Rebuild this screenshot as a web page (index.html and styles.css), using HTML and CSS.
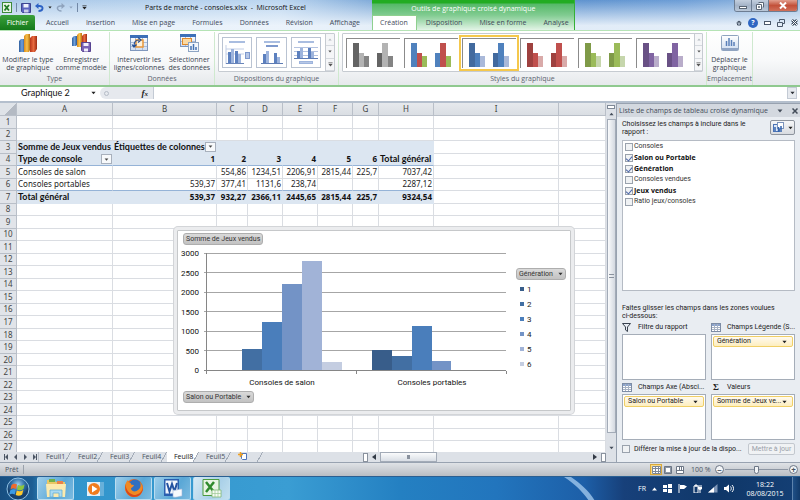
FILE: index.html
```html
<!DOCTYPE html>
<html lang="fr">
<head>
<meta charset="utf-8">
<title>Parts de marché - consoles.xlsx - Microsoft Excel</title>
<link rel="stylesheet" href="styles.css">
</head>
<body>
<svg class="defs" aria-hidden="true">
  <defs>
    <linearGradient id="gBlue"><stop offset="0" stop-color="#2f5f9e"/><stop offset=".5" stop-color="#6fa0dc"/><stop offset="1" stop-color="#2a5590"/></linearGradient>
    <linearGradient id="gGold"><stop offset="0" stop-color="#d98a1c"/><stop offset=".5" stop-color="#f7c04a"/><stop offset="1" stop-color="#b9700f"/></linearGradient>
    <linearGradient id="gRed"><stop offset="0" stop-color="#b8361a"/><stop offset=".5" stop-color="#e86a3f"/><stop offset="1" stop-color="#9c2b12"/></linearGradient>
    <linearGradient id="gCell" x2="0" y2="1"><stop offset="0" stop-color="#ffffff"/><stop offset="1" stop-color="#cfdcf0"/></linearGradient>
    <radialGradient id="gOrb" cy=".3"><stop offset="0" stop-color="#9fd0ee"/><stop offset=".6" stop-color="#2f6ea6"/><stop offset="1" stop-color="#16416f"/></radialGradient>
    <symbol id="down" viewBox="0 0 6 4"><path d="M0.5 0.5h5L3 3.5z" fill="currentColor"/></symbol>
    <symbol id="more" viewBox="0 0 6 6"><path d="M0.5 0.5h5v1h-5zM0.5 2.5h5L3 5.5z" fill="currentColor"/></symbol>
    <symbol id="sample" viewBox="0 0 54 29">
      <path class="a" d="M7 4h6v24H7zM31 14h5v14h-5z"/>
      <path class="b" d="M13 14h5v14h-5zM36 4h6v24h-6z"/>
      <path class="c" d="M18 17h5v11h-5zM42 17h5v11h-5z"/>
    </symbol>
    <symbol id="grid" viewBox="0 0 10 9">
      <rect x=".5" y=".5" width="9" height="8" fill="#fff" stroke="#7d8ca5"/>
      <path d="M1 1h8v2H1z" fill="#8ba3cc"/>
      <path d="M3.5 1v7M6.5 1v7M1 4.5h8M1 6.5h8" stroke="#a7b2c4" fill="none"/>
    </symbol>
  </defs>
</svg>

<header class="top">
  <div class="titlebar">
    <div class="quick">
      <svg width="10" height="11" viewBox="0 0 10 11"><rect x=".5" y=".5" width="9" height="10" fill="#e9f5e6" stroke="#3d8a3a"/><path d="M2.500 3l4.500 5.500M7 3L2.500 8.500" stroke="#1f7a24" stroke-width="1.800"/></svg>
      <i class="bar"></i>
      <button aria-label="Enregistrer"><svg width="10" height="10" viewBox="0 0 10 10"><path d="M.5.5h9v9h-8l-1-1z" fill="#5b64c0" stroke="#3c4590"/><path d="M2.500 1h5v3.500h-5z" fill="#eef1fb"/><path d="M3 6.500h4.500V9.500H3z" fill="#c9cde9"/></svg></button>
      <button aria-label="Annuler"><svg width="9" height="9" viewBox="0 0 9 9"><path d="M3.500 8c5 0 5.500-5 1-5H3" fill="none" stroke="#2c62c4" stroke-width="1.800"/><path d="M0 3l3.500-3v6z" fill="#2c62c4"/></svg></button>
      <svg class="tiny" width="4" height="3"><use href="#down"/></svg>
      <button class="off" aria-label="Rétablir"><svg width="9" height="9" viewBox="0 0 9 9"><path d="M5.500 8c-5 0-5.500-5-1-5H6" fill="none" stroke="#8fa3bd" stroke-width="1.500"/><path d="M9 3L5.500 0v6z" fill="#8fa3bd"/></svg></button>
      <svg class="tiny pale" width="4" height="3"><use href="#down"/></svg>
      <i class="bar"></i>
      <svg class="tiny" width="5" height="5"><use href="#more"/></svg>
    </div>
    <h1>Parts de marché - consoles.xlsx &nbsp;-&nbsp; Microsoft Excel</h1>
  </div>
  <nav class="tabs">
    <a class="file" href="#">Fichier</a>
    <a href="#">Accueil</a><a href="#">Insertion</a><a href="#">Mise en page</a><a href="#">Formules</a><a href="#">Données</a><a href="#">Révision</a><a href="#">Affichage</a>
  </nav>
  <div class="context">
    <div class="context-title">Outils de graphique croisé dynamique</div>
    <nav class="tabs">
      <a class="active" href="#">Création</a><a href="#">Disposition</a><a href="#">Mise en forme</a><a href="#">Analyse</a>
    </nav>
  </div>
  <div class="winbuttons">
    <button aria-label="Réduire"><svg width="8" height="8" viewBox="0 0 8 8"><rect x=".5" y="4.500" width="7" height="2" fill="#fff" stroke="#5a6675"/></svg></button><button aria-label="Restaurer"><svg width="8" height="8" viewBox="0 0 8 8"><path d="M2.500.5h5v5M.5 2.500h5v5h-5z" fill="#fff" stroke="#5a6675"/><path d="M2.500 4.500h1v1h-1z" stroke="#5a6675" fill="none"/></svg></button><button class="close" aria-label="Fermer"><svg width="8" height="7" viewBox="0 0 8 7"><path d="M1 .5l6 6M7 .5l-6 6" stroke="#fff" stroke-width="2"/></svg></button>
  </div>
  <div class="help">
    <svg width="6" height="6" viewBox="0 0 6 6"><path d="M.5 3L3 1l2.500 2M1.500 3.500L3 2.500l1.500 1v1.500h-3z" fill="none" stroke="#3d4a5c"/></svg>
    <span class="q">?</span>
    <svg width="7" height="7" viewBox="0 0 7 7"><rect x=".5" y="2.500" width="6" height="3" fill="#fff" stroke="#4b586a"/></svg>
    <svg width="8" height="8" viewBox="0 0 8 8"><path d="M2.500 2.500v-2h5v4h-2M.5 3.500h5v4h-5z" fill="none" stroke="#4b586a"/></svg>
    <svg width="7" height="7" viewBox="0 0 7 7"><path d="M1 1l5 5M6 1L1 6" stroke="#3d4a5c" stroke-width="2.500"/><path d="M1 1l5 5M6 1L1 6" stroke="#fff"/></svg>
  </div>
</header>

<section class="ribbon">
  <div class="group g-type">
    <div class="tools">
      <button><svg width="20" height="20" viewBox="0 0 20 20"><path d="M1 8l2-2h4v11l-1 2H1z" fill="url(#gBlue)"/><path d="M6 3l2-2h4v16l-1 2H6z" fill="url(#gGold)"/><path d="M12 5l2-2h5v13l-2 3h-5z" fill="url(#gRed)"/></svg><span>Modifier le type<br>de graphique</span></button>
      <button><svg width="20" height="20" viewBox="0 0 20 20"><path d="M1 5l2-2h3v9l-1 1H1z" fill="url(#gBlue)"/><path d="M6 2l2-2h3v12l-1 2H6z" fill="url(#gGold)"/><path d="M11 3l2-2h3v12h-5z" fill="url(#gRed)"/><path d="M10.500 9.500h9v9h-8l-1-1z" fill="#7a62b5" stroke="#574390"/><path d="M12.500 10h5v3h-5zM13 15.500h4v3h-4z" fill="#f1eefa"/></svg><span>Enregistrer<br>comme modèle</span></button>
    </div>
    <h2>Type</h2>
  </div>
  <div class="group g-data">
    <div class="tools">
      <button><svg width="20" height="20" viewBox="0 0 20 20"><rect x="1.500" y="2.500" width="17" height="15" fill="url(#gCell)" stroke="#7f97bd"/><path d="M1 2h18v3H1z" fill="#3d6fb8"/><path d="M6.500 5v12M13.500 5v12M2 9.500h16M2 13.500h16" stroke="#a9bbd8"/><path d="M7 7h7v7H7z" fill="#fdf1dd" stroke="#e8963a" stroke-width="1.500"/><path d="M5 13c0-4 2-6 5-6M9 4.500L12 7 9 9.500M3 11.500L5 14l2.500-2.500" fill="none" stroke="#234f96" stroke-width="1.200"/></svg><span>Intervertir les<br>lignes/colonnes</span></button>
      <button><svg width="20" height="20" viewBox="0 0 20 20"><rect x="1.500" y="1.500" width="15" height="12" fill="url(#gCell)" stroke="#7f97bd"/><path d="M1 1h16v3H1z" fill="#3d6fb8"/><path d="M6.500 4v9M11.500 4v9M2 8.500h14" stroke="#a9bbd8"/><rect x="3.500" y="5.500" width="9" height="6" fill="#fbd9a2" stroke="#e08a2c"/><rect x="9.500" y="9.500" width="10" height="9" fill="#f3f7fc" stroke="#8ea5c4"/><path d="M12 17v-4M14.500 17v-6M17 17v-3" stroke="#4573b4" stroke-width="1.500"/></svg><span>Sélectionner<br>des données</span></button>
    </div>
    <h2>Données</h2>
  </div>
  <div class="group g-layout">
    <div class="gallery">
      <button class="lay" aria-label="Disposition 1"><svg width="28" height="27" viewBox="0 0 28 27"><path d="M6 2h16v2H6z" fill="#a9bde0"/><path d="M3 6v19M3 10h18M3 15h18" stroke="#c3cfe6"/><path d="M3 24.500h18" stroke="#6a86ba"/><path d="M5 13h3v11H5zM12 12h3v12h-3z" fill="#5c80bf"/><path d="M8 10h3v14H8zM15 15h3v9h-3z" fill="#9db4dd"/><rect x="22.500" y="13.500" width="4" height="6" fill="#b7c7e6" stroke="#7e99cd"/></svg></button>
      <button class="lay" aria-label="Disposition 2"><svg width="28" height="27" viewBox="0 0 28 27"><path d="M6 2h16v2H6z" fill="#a9bde0"/><path d="M8 6h12v2H8z" fill="#7e99cd"/><path d="M3 24.500h22" stroke="#5e7cb4"/><path d="M5 15h3v9H5zM16 14h3v10h-3z" fill="#5c80bf"/><path d="M8 12h3v12H8zM19 18h3v6h-3z" fill="#9db4dd"/></svg></button>
      <button class="lay" aria-label="Disposition 3"><svg width="28" height="27" viewBox="0 0 28 27"><path d="M6 2h16v2H6z" fill="#a9bde0"/><path d="M2 8.500h24M2 12.500h24M2 16.500h24" stroke="#b4c3e0"/><path d="M2 19.500h24" stroke="#5e7cb4"/><path d="M5 12h3v7H5zM16 9h3v10h-3z" fill="#5c80bf"/><path d="M8 9h3v10H8zM19 13h3v6h-3z" fill="#9db4dd"/><rect x="7.500" y="22.500" width="13" height="2" fill="#b7c7e6" stroke="#9db4dd"/></svg></button>
      <div class="spin"><button class="off" aria-label="Précédent"><svg class="flip" width="4" height="3"><use href="#down"/></svg></button><button aria-label="Suivant"><svg width="4" height="3"><use href="#down"/></svg></button><button aria-label="Autres dispositions"><svg width="5" height="5"><use href="#more"/></svg></button></div>
    </div>
    <h2>Dispositions du graphique</h2>
  </div>
  <div class="group g-style">
    <div class="gallery">
      <button class="sty s1" aria-label="Style 1"><svg><use href="#sample"/></svg></button>
      <button class="sty s2" aria-label="Style 2"><svg><use href="#sample"/></svg></button>
      <button class="sty s3 selected" aria-label="Style 3"><svg><use href="#sample"/></svg></button>
      <button class="sty s4" aria-label="Style 4"><svg><use href="#sample"/></svg></button>
      <button class="sty s5" aria-label="Style 5"><svg><use href="#sample"/></svg></button>
      <button class="sty s6" aria-label="Style 6"><svg><use href="#sample"/></svg></button>
      <div class="spin"><button class="off" aria-label="Précédent"><svg class="flip" width="4" height="3"><use href="#down"/></svg></button><button aria-label="Suivant"><svg width="4" height="3"><use href="#down"/></svg></button><button aria-label="Autres styles"><svg width="5" height="5"><use href="#more"/></svg></button></div>
    </div>
    <h2>Styles du graphique</h2>
  </div>
  <div class="group g-place">
    <div class="tools">
      <button><svg width="20" height="20" viewBox="0 0 20 20"><rect x="1.500" y="2.500" width="17" height="15" rx="1" fill="url(#gCell)" stroke="#8fa3bf"/><path d="M2 15h16v2H2z" fill="#8fa3c4"/><path d="M6.500 13V8M9 13V5M11.500 13V7M14 13V9" stroke="#5a7fb8" stroke-width="1.500"/></svg><span>Déplacer le<br>graphique</span></button>
    </div>
    <h2>Emplacement</h2>
  </div>
</section>

<div class="formula">
  <input class="namebox" aria-label="Zone Nom" value="Graphique 2">
  <svg class="tiny" width="5" height="4"><use href="#down"/></svg>
  <div class="fx"><i></i><button aria-label="Insérer une fonction">f<small>x</small></button></div>
  <input class="fbar" aria-label="Barre de formule">
  <button class="expand" aria-label="Développer"><svg width="5" height="4"><use href="#down"/></svg></button>
</div>

<main>
  <div class="book">
    <div class="sheetrow">
      <div class="sheet">
        <table>
          <colgroup><col class="wn"><col class="wa"><col class="wb"><col class="wc"><col class="wd"><col class="wd"><col class="wd"><col class="wg"><col class="wh"><col class="wi"><col></colgroup>
          <thead><tr><th class="corner"></th><th>A</th><th>B</th><th>C</th><th>D</th><th>E</th><th>F</th><th>G</th><th>H</th><th>I</th><th></th></tr></thead>
          <tbody>
          <tr><th>1</th><td><td><td><td><td><td><td><td><td><td></tr>
          <tr><th>2</th><td><td><td><td><td><td><td><td><td><td></tr>
          <tr class="head"><th>3</th><td class="l">Somme de Jeux vendus</td><td class="l">Étiquettes de colonnes<button class="filter" aria-label="Filtrer les colonnes"><svg width="5" height="3"><use href="#down"/></svg></button></td><td><td><td><td><td><td><td><td></tr>
          <tr class="head under"><th>4</th><td class="l">Type de console<button class="filter" aria-label="Filtrer les lignes"><svg width="5" height="3"><use href="#down"/></svg></button></td><td>1</td><td>2</td><td>3</td><td>4</td><td>5</td><td>6</td><td class="l">Total général</td><td><td></tr>
          <tr><th>5</th><td class="l">Consoles de salon</td><td></td><td>554,86</td><td>1234,51</td><td>2206,91</td><td>2815,44</td><td>225,7</td><td>7037,42</td><td><td></tr>
          <tr class="under"><th>6</th><td class="l">Consoles portables</td><td>539,37</td><td>377,41</td><td>1131,6</td><td>238,74</td><td></td><td></td><td>2287,12</td><td><td></tr>
          <tr class="head"><th>7</th><td class="l">Total général</td><td>539,37</td><td>932,27</td><td>2366,11</td><td>2445,65</td><td>2815,44</td><td>225,7</td><td>9324,54</td><td><td></tr>
          <tr><th>8</th><td><td><td><td><td><td><td><td><td><td></tr>
          <tr><th>9</th><td><td><td><td><td><td><td><td><td><td></tr>
          <tr><th>10</th><td><td><td><td><td><td><td><td><td><td></tr>
          <tr><th>11</th><td><td><td><td><td><td><td><td><td><td></tr>
          <tr><th>12</th><td><td><td><td><td><td><td><td><td><td></tr>
          <tr><th>13</th><td><td><td><td><td><td><td><td><td><td></tr>
          <tr><th>14</th><td><td><td><td><td><td><td><td><td><td></tr>
          <tr><th>15</th><td><td><td><td><td><td><td><td><td><td></tr>
          <tr><th>16</th><td><td><td><td><td><td><td><td><td><td></tr>
          <tr><th>17</th><td><td><td><td><td><td><td><td><td><td></tr>
          <tr><th>18</th><td><td><td><td><td><td><td><td><td><td></tr>
          <tr><th>19</th><td><td><td><td><td><td><td><td><td><td></tr>
          <tr><th>20</th><td><td><td><td><td><td><td><td><td><td></tr>
          <tr><th>21</th><td><td><td><td><td><td><td><td><td><td></tr>
          <tr><th>22</th><td><td><td><td><td><td><td><td><td><td></tr>
          <tr><th>23</th><td><td><td><td><td><td><td><td><td><td></tr>
          <tr><th>24</th><td><td><td><td><td><td><td><td><td><td></tr>
          <tr><th>25</th><td><td><td><td><td><td><td><td><td><td></tr>
          <tr><th>26</th><td><td><td><td><td><td><td><td><td><td></tr>
          <tr><th>27</th><td><td><td><td><td><td><td><td><td><td></tr>
          </tbody>
        </table>
        <figure class="chart">
          <div class="plot">
            <button class="pill">Somme de Jeux vendus</button>
            <svg class="bars" width="330" height="146" viewBox="0 0 330 146">
              <path d="M26 8.500h302M26 27.500h302M26 47.500h302M26 66.500h302M26 86.500h302M26 105.500h302" stroke="#a6a6a6"/>
              <path d="M64 104h20v22H64z" fill="#426fa3"/><path d="M84 77h20v49H84z" fill="#4a7ebb"/><path d="M104 39h20v87h-20z" fill="#7393c6"/><path d="M124 16h20v110h-20z" fill="#a1b3d7"/><path d="M144 117h20v9h-20z" fill="#c4cde1"/>
              <path d="M194 105h20v21h-20z" fill="#385d8a"/><path d="M214 111h20v15h-20z" fill="#426fa3"/><path d="M234 81h20v45h-20z" fill="#4a7ebb"/><path d="M254 116h19v10h-19z" fill="#7393c6"/>
              <path d="M28.500 8v121M26 125.500h302M178.500 126v3M328.500 126v3" stroke="#868686" fill="none"/>
              <g text-anchor="end"><text x="21" y="11">3000</text><text x="21" y="31">2500</text><text x="21" y="50">2000</text><text x="21" y="70">1500</text><text x="21" y="89">1000</text><text x="21" y="109">500</text><text x="21" y="128">0</text></g>
              <g text-anchor="middle"><text x="104" y="140">Consoles de salon</text><text x="254" y="140">Consoles portables</text></g>
            </svg>
            <button class="pill">Salon ou Portable <svg width="5" height="4"><use href="#down"/></svg></button>
          </div>
          <div class="legend">
            <button class="pill">Génération <svg width="5" height="4"><use href="#down"/></svg></button>
            <ul><li class="k1">1</li><li class="k2">2</li><li class="k3">3</li><li class="k4">4</li><li class="k5">5</li><li class="k6">6</li></ul>
          </div>
        </figure>
      </div>
      <div class="vscroll"><i class="split"></i><svg class="flip" width="5" height="4"><use href="#down"/></svg><div class="thumb"><i></i></div><svg width="5" height="4"><use href="#down"/></svg></div>
    </div>
    <div class="sheetbar">
      <div class="arrows">
        <svg width="34" height="6" viewBox="0 0 34 6"><path d="M0 0h1v6H0zM4 0v6L1 3zM13 0v6l-3-3zM20 0l3 3-3 3zM29 0l3 3-3 3zM32 0h1v6h-1z" fill="#4c5665"/></svg>
      </div>
      <nav class="sheets"><a href="#">Feuil1</a><a href="#">Feuil2</a><a href="#">Feuil3</a><a href="#">Feuil4</a><a class="on" href="#">Feuil8</a><a href="#">Feuil5</a><a href="#" aria-label="Insérer une feuille"><svg width="10" height="9" viewBox="0 0 10 9"><path d="M3.500 1.500h5v6h-4l-1-1z" fill="#fff" stroke="#4f74b8"/><path d="M2.500 0v5M0 2.500h5" stroke="#f0a020" stroke-width="1.500"/></svg></a></nav>
      <div class="hscroll"><i class="split"></i><svg width="4" height="6" viewBox="0 0 4 6"><path d="M4 0v6L0 3z" fill="#333b46"/></svg><div class="thumb"><i></i></div><svg class="end" width="4" height="6" viewBox="0 0 4 6"><path d="M0 0v6l4-3z" fill="#333b46"/></svg><i class="split"></i></div>
    </div>
  </div>

  <aside class="panel">
    <div class="panel-title"><h2>Liste de champs de tableau croisé dynamique</h2><svg width="6" height="4"><use href="#down"/></svg><svg width="6" height="6" viewBox="0 0 6 6"><path d="M.5.5l5 5M5.500.5l-5 5" stroke="#444d5a" stroke-width="1.500"/></svg></div>
    <div class="panel-body">
      <div class="choose">
        <p>Choisissez les champs à inclure dans le rapport :</p>
        <button class="layoutbtn" aria-label="Disposition des champs"><svg width="11" height="11" viewBox="0 0 11 11"><rect x=".5" y="2.500" width="6" height="7" fill="#dce7f7" stroke="#4a73b6"/><rect x="4.500" y=".5" width="6" height="6" fill="#fff" stroke="#7b93bb"/><path d="M2 9V5M5.500 10V5M8 10V4" stroke="#3564ad" stroke-width="1.500"/></svg><svg width="5" height="4"><use href="#down"/></svg></button>
      </div>
      <div class="fields">
        <label><input type="checkbox">Consoles</label>
        <label><input type="checkbox" checked>Salon ou Portable</label>
        <label><input type="checkbox" checked>Génération</label>
        <label><input type="checkbox">Consoles vendues</label>
        <label><input type="checkbox" checked>Jeux vendus</label>
        <label><input type="checkbox">Ratio jeux/consoles</label>
      </div>
      <p class="drag">Faites glisser les champs dans les zones voulues<br>ci-dessous:</p>
      <div class="zones">
        <section><h3><svg width="10" height="9" viewBox="0 0 10 9"><path d="M.5.5h8L5.500 4v4.500l-2-1.500V4z" fill="#e8edf4" stroke="#39424f"/></svg>Filtre du rapport</h3><div class="drop"></div></section>
        <section><h3><svg width="10" height="9"><use href="#grid"/></svg>Champs Légende (S...</h3><div class="drop"><button>Génération<svg width="5" height="4"><use href="#down"/></svg></button></div></section>
        <section><h3><svg width="10" height="9"><use href="#grid"/></svg>Champs Axe (Absci...</h3><div class="drop"><button>Salon ou Portable<svg width="5" height="4"><use href="#down"/></svg></button></div></section>
        <section><h3><b>Σ</b>Valeurs</h3><div class="drop"><button>Somme de Jeux ve...<svg width="5" height="4"><use href="#down"/></svg></button></div></section>
      </div>
      <div class="defer"><label><input type="checkbox">Différer la mise à jour de la dispo...</label><button disabled>Mettre à jour</button></div>
    </div>
  </aside>
</main>

<div class="status">
  <span class="ready">Prêt</span>
  <div class="views">
    <button class="on" aria-label="Normal"><svg width="9" height="8" viewBox="0 0 9 8"><path d="M0 0h9v8H0z" fill="#fff"/><path d="M.5.5h8v7h-8zM3.500 0v8M6.500 0v8M0 2.500h9M0 5.500h9" fill="none" stroke="#7d8796"/></svg></button><button aria-label="Mise en page"><svg width="8" height="8" viewBox="0 0 8 8"><path d="M.5.5h7v7h-7z" fill="#8d97a6" stroke="#6c7685"/><path d="M2 2h4v4H2z" fill="#fff"/></svg></button><button aria-label="Aperçu des sauts de page"><svg width="8" height="8" viewBox="0 0 8 8"><path d="M.5.5h7v7h-7z" fill="#fff" stroke="#6c7685"/><path d="M3.500 1v3M5.500 1v3M1 4.500h6" stroke="#6c7685" fill="none"/></svg></button>
  </div>
  <output>100 %</output>
  <button class="round" aria-label="Zoom arrière">−</button>
  <input type="range" aria-label="Zoom" min="0" max="100" value="50">
  <button class="round" aria-label="Zoom avant">+</button>
</div>

<footer class="taskbar">
  <button class="start" aria-label="Démarrer"><svg width="24" height="24" viewBox="0 0 24 24"><circle cx="12" cy="12" r="11" fill="url(#gOrb)" stroke="#8fc1e4"/><path d="M5.500 8c2-1.500 4-1.500 5.500-.5L10 12c-2-1-3.500-1-5.500.5z" fill="#ef6a2c"/><path d="M12 8c2 1 4 1 6.500-.5L17.500 12c-2 1.500-4.500 1.500-6.500.5z" fill="#8cc63e"/><path d="M4.200 13.500c2-1.500 3.800-1.500 5.500-.5L8.700 17.500c-2-1-3.500-1-5.500.3z" fill="#3a9be6"/><path d="M10.800 13.500c2 1 4 1 6.500-.5L16.200 17.500c-2 1.500-4.500 1.500-6.500.5z" fill="#fcc92f"/></svg></button>
  <button class="app framed" aria-label="Explorateur"><svg width="22" height="20" viewBox="0 0 22 20"><path d="M2 2h7l2 2h9v14H2z" fill="#e8c766"/><path d="M4 1h6v3H4z" fill="#6fb04a"/><path d="M12 3h6v3h-6z" fill="#e8814a"/><path d="M1 6h20l-1 13H2z" fill="#fbeaae"/><path d="M5 19v-7h12v7h-3v-4H8v4z" fill="#a9daf2" stroke="#64aed6" stroke-width=".8"/></svg></button>
  <button class="app" aria-label="Lecteur multimédia"><svg width="20" height="20" viewBox="0 0 20 20"><rect x="6" y="3" width="13" height="14" fill="#7dbbe0" opacity=".7"/><rect x="2" y="3" width="13" height="14" fill="#e3f0f8"/><circle cx="9" cy="10" r="6" fill="#f07c1e"/><path d="M7 6.500v7l5.500-3.500z" fill="#fff"/></svg></button>
  <button class="app framed" aria-label="Firefox"><svg width="20" height="20" viewBox="0 0 20 20"><circle cx="10" cy="10" r="9" fill="#e8641b"/><circle cx="11" cy="8" r="6.500" fill="#2f6fc0"/><path d="M1 9c0-3 1-5 3-7 0 2 1 3 3 3-1 1 1 2 3 2-1 3-3 2-3 4 1 3 5 3 7 1 3-2 3-5 2-8 4 4 4 15-6 15-5 0-9-4-9-10z" fill="#f08a24"/><path d="M1.500 6C0 14 5 19 10 19c6 0 9-5 9-9-2 5-5 7-9 7-4-1-8-4-8.500-11z" fill="#d9481a"/></svg></button>
  <button class="app framed" aria-label="Word"><svg width="20" height="20" viewBox="0 0 20 20"><path d="M1 1h15v17H1z" fill="#2b5fb0"/><path d="M2.500 2.500h12v13h-12z" fill="#f2f6fd"/><path d="M4 5l2.500 8.500L9 6l2.500 7.500L14 5" fill="none" stroke="#2452a0" stroke-width="2"/><path d="M10 12c3 1 5-1 9-1v7c-3 0-5 2-9 1z" fill="#f8fafd" stroke="#9db3d6" stroke-width=".6"/></svg></button>
  <button class="app framed lit" aria-label="Excel"><svg width="20" height="20" viewBox="0 0 20 20"><path d="M1 1.500h16v16H1z" fill="#e8f4e4" stroke="#4b9a3f"/><path d="M4 4l8 10M12 4L4 14" stroke="#2f8a2c" stroke-width="2.500"/><path d="M10 12h9v7h-9z" fill="#f6fbf4" stroke="#7fb874" stroke-width=".8"/><path d="M13 12v7M16 12v7M10 15.500h9" stroke="#9cc994" stroke-width=".7"/></svg></button>
  <div class="streak"><svg width="40" height="24" viewBox="0 0 40 24"><path d="M1 0h7c10 7 18 14 24 24h-6C20 15 12 7 1 0z" fill="#a8cdf0" opacity=".75"/></svg></div>
  <div class="tray">
    <span>FR</span>
    <svg width="5" height="4" viewBox="0 0 5 4"><path d="M0 3.500L2.500.5 5 3.500z" fill="#fff"/></svg>
    <svg width="9" height="9" viewBox="0 0 9 9"><path d="M0 1h4v3H0zM5 0h4v4H5zM0 5h4v3H0zM5 5h4v4H5z" fill="#fff"/></svg>
    <svg width="9" height="9" viewBox="0 0 9 9"><path d="M.5 0h1v9h-1zM2 1h4l3 1.500L6 5H2z" fill="#fff"/></svg>
    <svg width="9" height="9" viewBox="0 0 9 9"><path d="M1 2h4v7H1zM2 1h2v1H2z" fill="none" stroke="#fff"/><path d="M5 3h4v2L7.500 6v3h-1V6L5 5zM5.500 1h1v2h-1zM7.500 1h1v2h-1z" fill="#fff"/></svg>
    <svg width="10" height="9" viewBox="0 0 10 9"><path d="M0 8.500L9.500 8.500V0z" fill="#7f97b8"/><path d="M0 8.500h6V3.200z" fill="#fff"/></svg>
    <svg width="10" height="9" viewBox="0 0 10 9"><path d="M0 3h2l3-2.500v8L2 6H0z" fill="#fff"/><path d="M6.500 2.500c1 1 1 3 0 4M8 1c2 2 2 5 0 7" fill="none" stroke="#fff"/></svg>
    <time>18:22<br>08/08/2015</time>
  </div>
  <button class="desktop" aria-label="Afficher le bureau"></button>
</footer>
</body>
</html>
```

FILE: styles.css
```css
* { box-sizing: border-box; }

body {
  margin: 0;
  height: 100vh;
  display: flex;
  flex-direction: column;
  overflow: hidden;
  font: 7px/9px "Open Sans", "Noto Sans", sans-serif;
  color: #2b2f36;
  background: #dfe3e8;
}

h1, h2, h3, p, ul, figure { margin: 0; padding: 0; font-size: inherit; font-weight: normal; }
ul { list-style: none; }
a { color: inherit; text-decoration: none; }
button, input { font: inherit; color: inherit; margin: 0; padding: 0; border: 0; background: none; }
svg { display: block; flex: none; }
i { display: block; }
.defs { position: absolute; width: 0; height: 0; }
.flip { transform: scaleY(-1); }

/* Title bar and tabs */
.top {
  flex: none;
  display: grid;
  grid-template: 15px 15px / 372px 203px 1fr;
  background:
    linear-gradient(rgba(255, 255, 255, 0), rgba(240, 246, 252, .9) 85%),
    linear-gradient(90deg, #a9c8e8, #bcd6f0 35%, #7ea9d8 47%, #5f93cf 73%, #6c9dd6 85%, #9bbde2);
  border-bottom: 1px solid #b5e3b5;
}
.titlebar { display: flex; align-items: center; }
.quick { display: flex; align-items: center; gap: 4px; padding-left: 2px; width: 145px; }
.quick .bar { width: 1px; height: 9px; background: #7288a6; }
.tiny { color: #222; }
.pale { color: #8fa3bd; }
h1 { color: #111; white-space: nowrap; }
.top > .tabs { grid-column: 1; grid-row: 2; }
.tabs { display: flex; align-items: stretch; color: #3f4a5a; }
.tabs a { flex: none; padding: 3px 8px 0 9px; white-space: nowrap; }
.tabs .file {
  width: 35px;
  margin-right: 2px;
  padding: 3px 0 0;
  text-align: center;
  color: #fff;
  background: linear-gradient(#3aa03a, #157a1b);
  border-radius: 2px 2px 0 0;
}
.context {
  grid-column: 2;
  grid-row: 1 / 3;
  display: grid;
  grid-template-rows: 15px 15px;
  background: linear-gradient(#22ac22 0, #22ac22 3px, #55b968 4px, #80cb90 50%, #e2f4e6);
  border-right: 1px solid #35b035;
}
.context-title { color: #fff; text-align: center; padding: 4px 2px 0 0; }
.context .tabs a.active { background: #fff; border: 1px solid #8fd08f; border-bottom: 0; padding: 2px 8px 0 7px; }
.winbuttons { grid-column: 3; grid-row: 1; justify-self: end; display: flex; height: 12px; margin-right: 2px; border: 1px solid #6d7d92; border-top: 0; border-radius: 0 0 3px 3px; overflow: hidden; }
.winbuttons button { width: 17px; display: grid; place-items: center; background: linear-gradient(#c3cfde, #a5b4c8 50%, #b9c7d8); border-right: 1px solid #6d7d92; }
.winbuttons .close { width: 28px; border: 0; background: linear-gradient(#e2a08f, #c3513a 50%, #d1705a); }
.help { grid-column: 3; grid-row: 2; justify-self: end; display: flex; align-items: center; gap: 6px; padding-right: 2px; }
.q { width: 10px; height: 10px; border-radius: 50%; background: #2f66c2; color: #fff; text-align: center; font-weight: 700; }

/* Ribbon */
.ribbon {
  flex: none;
  display: flex;
  height: 56px;
  padding-top: 1px;
  background: linear-gradient(#fff, #f8f9fa 55%, #e6e9ec);
  border-bottom: 2px solid #8fc98f;
}
.group { display: flex; flex-direction: column; justify-content: space-between; border-right: 1px solid #cfe9cf; }
.group h2 { text-align: center; color: #5b6470; line-height: 10px; padding-bottom: 1px; white-space: nowrap; }
.g-type { width: 110px; }
.g-data { width: 105px; }
.g-layout { width: 124px; padding: 0 3px; }
.g-style { width: 368px; padding: 0 3px; }
.g-place { width: 46px; }
.tools { display: flex; justify-content: space-evenly; color: #3a4350; }
.tools button { display: flex; flex-direction: column; align-items: center; gap: 3px; line-height: 8px; white-space: nowrap; padding-top: 1px; }
.gallery { display: flex; align-items: center; gap: 4px; height: 39px; margin-top: 1px; padding-left: 3px; border: 1px solid #c6cbd1; background: #fff; border-radius: 1px; }
.lay { width: 31px; height: 31px; border: 1px solid #b9c3d2; display: grid; place-items: center; }
.spin { align-self: stretch; width: 9px; margin-left: auto; display: grid; grid-template-rows: 1fr 1fr 1fr; border-left: 1px solid #c6cbd1; color: #555; }
.spin button { display: grid; place-items: center; background: #f5f6f8; border-bottom: 1px solid #d5d9de; }
.spin .off { color: #b5bac1; }
.sty { width: 54px; height: 30px; border-top: 1px solid #8b8b8b; border-left: 1px solid #8b8b8b; }
.sty svg { width: 54px; height: 29px; margin-left: -1px; }
.selected { outline: 2px solid #f5c84c; outline-offset: 1px; }
.a { fill: var(--a); } .b { fill: var(--b); } .c { fill: var(--c); }
.s1 { --a: #646464; --b: #b3b3b3; --c: #848484; }
.s2 { --a: #4f81bd; --b: #c0504d; --c: #9bbb59; }
.s3 { --a: #426a9e; --b: #4f81bd; --c: #aab9d9; }
.s4 { --a: #9e413f; --b: #c0504d; --c: #d9aaa9; }
.s5 { --a: #7f9a48; --b: #9bbb59; --c: #c6d6ac; }
.s6 { --a: #695185; --b: #8064a2; --c: #b9adca; }

/* Formula bar */
.formula { flex: none; display: flex; align-items: center; height: 16px; padding: 0 3px 2px 0; background: #fff; border-bottom: 2px solid #b4bfcd; }
.namebox { width: 91px; padding-left: 21px; font: 9px/12px Lato, sans-serif; color: #111; }
.fx { display: flex; align-items: center; justify-content: space-between; align-self: stretch; width: 54px; margin-left: 4px; padding: 0 5px 0 4px; background: #e6e9ee; border-right: 1px solid #c3cad4; border-radius: 6px 0 0 6px; }
.fx i { width: 5px; height: 5px; border: 1px solid #b5bcc7; border-radius: 50%; }
.fx button { font: italic bold 9px/10px "Liberation Serif", serif; color: #222; }
.fx small { font-size: 7px; }
.fbar { flex: 1; min-width: 0; }
.expand { align-self: stretch; width: 10px; display: grid; place-items: center; background: #e6e9ee; border: 1px solid #c3cad4; }

/* Worksheet */
main { flex: 1; min-height: 0; display: flex; }
.book { flex: 1; min-width: 0; display: flex; flex-direction: column; }
.sheetrow { flex: 1; min-height: 0; display: flex; }
.sheet { flex: 1; min-width: 0; position: relative; overflow: hidden; background: #fff; }
table { width: 100%; height: calc(100% + 2px); table-layout: fixed; border-collapse: separate; border-spacing: 0; font: 8px/10px "Noto Sans", sans-serif; color: #1c1c1c; }
.wn { width: 17px; } .wa { width: 96px; } .wb { width: 104px; } .wc { width: 31px; } .wd { width: 35px; } .wg { width: 26px; } .wh { width: 55px; } .wi { width: 125px; }
td, th { padding: 0; overflow: hidden; white-space: nowrap; border-right: 1px solid #dadde2; border-bottom: 1px solid #dadde2; }
td { text-align: right; padding-right: 1px; }
td.l { text-align: left; padding: 0 0 0 1px; }
th { font-weight: normal; color: #444; background: #e1e4e9; border-color: #b9bfc8; }
thead th { background: linear-gradient(#e6e9ed, #dadee3); height: 13px; }
.corner { background: linear-gradient(135deg, #dfe3e8 60%, #b4bac3 60%); }
.head td { font-weight: 700; background: #dce6f1; border-color: #dce6f1; color: #111; }
.head td.l { font-family: Lato, sans-serif; font-size: 9px; }
.under td { border-bottom-color: #95b3d7; }
.head td:nth-last-child(-n+2), .under td:nth-last-child(-n+2) { background: none; border-color: #dadde2; }
.filter { float: right; width: 11px; height: 10px; display: grid; place-items: center; background: #f7f9fb; border: 1px solid #a8b0bc; color: #444; }

/* Chart */
.chart {
  position: absolute;
  left: 174px;
  top: 124px;
  display: flex;
  width: 400px;
  height: 187px;
  padding: 3px 5px 3px 6px;
  background: #fff;
  border: 3px solid #ebecee;
  border-radius: 4px;
  box-shadow: inset 0 0 0 1px #c6c8ca, 0 0 0 1px #d3d5d8;
  color: #222;
}
.plot { flex: 1; display: flex; flex-direction: column; align-items: flex-start; }
.bars { margin: 0 0 0 -5px; font: 8px Roboto, sans-serif; }
.bars text { fill: #111; }
.pill { display: flex; align-items: center; gap: 5px; height: 12px; padding: 0 2px; font-family: Roboto, sans-serif; white-space: nowrap; border: 1px solid #aeaeae; border-radius: 3px; background: linear-gradient(#dadada, #c2c2c2); color: #333; }
.legend { width: 50px; padding-top: 35px; }
.legend ul { padding: 2px 0 0 4px; font: 8px/15px Roboto, sans-serif; }
.legend li::before { content: ""; display: inline-block; width: 4px; height: 4px; margin: 0 3px 1px 0; background: var(--k); }
.k1 { --k: #385d8a; } .k2 { --k: #426fa3; } .k3 { --k: #4a7ebb; } .k4 { --k: #7393c6; } .k5 { --k: #a1b3d7; } .k6 { --k: #c4cde1; }

/* Scroll bars and sheet tabs */
.vscroll { flex: none; width: 10px; display: flex; flex-direction: column; align-items: center; gap: 3px; padding: 2px 0; background: #dde1e7; color: #444d5a; }
.vscroll .split { width: 8px; height: 4px; background: #fff; border: 1px solid #7f8997; }
.vscroll .thumb { width: 9px; height: 314px; margin-bottom: auto; display: grid; place-items: center; background: linear-gradient(90deg, #fafbfc, #d3d8e0); border: 1px solid #a3abb7; }
.vscroll .thumb i { width: 5px; height: 4px; border: solid #8a929e; border-width: 1px 0; }
.sheetbar { flex: none; display: flex; align-items: stretch; height: 11px; padding-right: 10px; background: #dde1e7; border-bottom: 1px solid #98a2b0; }
.arrows { display: flex; align-items: center; width: 39px; padding-left: 4px; border-right: 1px solid #b9c0ca; }
.sheets { flex: 1; display: flex; color: #4a5361; }
.sheets a { width: 32px; padding-left: 7px; line-height: 10px; background: linear-gradient(120deg, transparent 27px, #a4acb8 27px, #a4acb8 28px, transparent 28px); }
.sheets .on { color: #111; background: linear-gradient(120deg, #fff 27px, #a4acb8 27px, #a4acb8 28px, transparent 28px); }
.hscroll { width: 243px; display: flex; align-items: center; gap: 4px; }
.hscroll .split { width: 5px; height: 9px; background: #fff; border: 1px solid #8a929e; }
.hscroll .thumb { width: 57px; height: 10px; display: grid; place-items: center; background: linear-gradient(#fafbfc, #d9dee5); border: 1px solid #a3abb7; }
.hscroll .thumb i { width: 3px; height: 4px; background: #8a929e; }
.hscroll .end { margin-left: auto; }

/* Field list */
.panel { flex: none; width: 184px; display: flex; flex-direction: column; background: #e9edf2; border: solid #98a2b0; border-width: 1px 0 1px 1px; }
.panel-title { display: flex; align-items: center; gap: 9px; height: 13px; padding: 0 4px 0 2px; background: #d3d8df; color: #444d5a; }
.panel-title h2 { flex: 1; white-space: nowrap; }
.panel-body { flex: 1; display: flex; flex-direction: column; padding: 3px 5px 7px; font-family: Roboto, sans-serif; color: #222; }
.choose { display: flex; align-items: flex-start; justify-content: space-between; line-height: 8px; height: 20px; }
.choose p { width: 125px; }
.layoutbtn { width: 25px; height: 15px; display: flex; align-items: center; justify-content: center; gap: 4px; border: 1px solid #8d949e; border-radius: 2px; background: linear-gradient(#f6f7f8, #d8dbe0); color: #222; }
.fields { flex: 1; padding: 0 2px; background: #fff; border: 1px solid #b5bbc4; }
.fields label { display: flex; align-items: center; gap: 1px; height: 11px; color: #333; }
.fields label:has(:checked) { font-family: "Open Sans", sans-serif; font-weight: 700; color: #111; }
input[type="checkbox"] { appearance: none; flex: none; width: 8px; height: 8px; border: 1px solid #9aa2ad; background: #f0f2f4; }
input[type="checkbox"]:checked::before { content: ""; display: block; width: 3px; height: 5px; margin: 0 auto; border: solid #4b66a8; border-width: 0 1px 1px 0; transform: rotate(40deg); }
.drag { margin-top: 13px; line-height: 8px; white-space: nowrap; }
.zones { display: grid; grid-template-columns: 1fr 1fr; column-gap: 5px; }
.zones h3 { display: flex; align-items: center; gap: 6px; height: 14px; white-space: nowrap; }
.zones h3 b { width: 10px; font: bold 9px/10px "Liberation Serif", serif; text-align: center; }
.drop { height: 46px; padding: 1px; background: #fff; border: 1px solid #a5adb8; }
.drop button { display: flex; align-items: center; justify-content: space-between; width: 100%; height: 11px; padding: 0 5px 0 3px; white-space: nowrap; border: 1px solid #f0cf66; border-radius: 2px; background: linear-gradient(#fffaf0, #fdeebf); }
.defer { display: flex; align-items: center; justify-content: space-between; margin-top: 3px; white-space: nowrap; }
.defer label { display: flex; align-items: center; gap: 4px; }
.defer button { width: 47px; height: 12px; border: 1px solid #c3c8cf; border-radius: 2px; color: #9aa1ab; background: #f0f2f4; }

/* Status bar */
.status { flex: none; display: flex; align-items: center; height: 13px; padding: 0 2px 0 5px; background: linear-gradient(#dfe2e6, #b9bdc3); color: #4a5361; }
.ready { width: 19px; border-right: 1px solid #9aa1ab; }
.views { display: flex; align-items: center; margin-left: auto; }
.views button { width: 12px; height: 11px; display: grid; place-items: center; }
.views .on { background: #fcdc80; border: 1px solid #d9a93c; }
.status output { width: 29px; padding-left: 5px; }
.round { width: 9px; height: 9px; border: 1px solid #6c7685; border-radius: 50%; background: #f3f5f7; font: bold 8px/7px "Open Sans", sans-serif; text-align: center; }
.status input { appearance: none; width: 63px; height: 9px; margin: 0 1px; background: linear-gradient(#8d96a3, #8d96a3) center / 100% 1px no-repeat; }
.status input::-webkit-slider-thumb { appearance: none; width: 5px; height: 8px; border: 1px solid #6c7685; border-radius: 0 0 3px 3px; background: #f3f5f7; }

/* Taskbar */
.taskbar {
  flex: none;
  display: flex;
  align-items: stretch;
  height: 24px;
  border-top: 1px solid #2a5f92;
  background: linear-gradient(90deg, #174e80 0, #1c5d93 4%, #3194cb 6%, #3a9dd3 36%, #2480c2 50%, #2275bd 62%, #1d5fa8 73%, #17407a 78%, #0f3768 90%, #143f75);
  color: #fff;
}
.taskbar button { display: grid; place-items: center; }
.start { width: 35px; }
.app { width: 37px; margin-left: 2px; }
.framed { background: linear-gradient(120deg, #9ccdea, #5aa7d6 60%, #7cbbe0); border: 1px solid #b9dcf0; border-top: 0; border-radius: 2px; }
.lit { background: linear-gradient(120deg, #d8eaf4, #a9d0e8 60%, #c2e0ef); }
.streak { flex: 1; display: flex; justify-content: flex-end; padding-right: 35px; }
.tray { display: flex; align-items: center; gap: 6px; }
.tray time { width: 50px; text-align: center; }
.desktop { width: 8px; margin-left: 2px; border-left: 1px solid #5d83ad; background: linear-gradient(90deg, #1f4f86, #123a6a); }
```
